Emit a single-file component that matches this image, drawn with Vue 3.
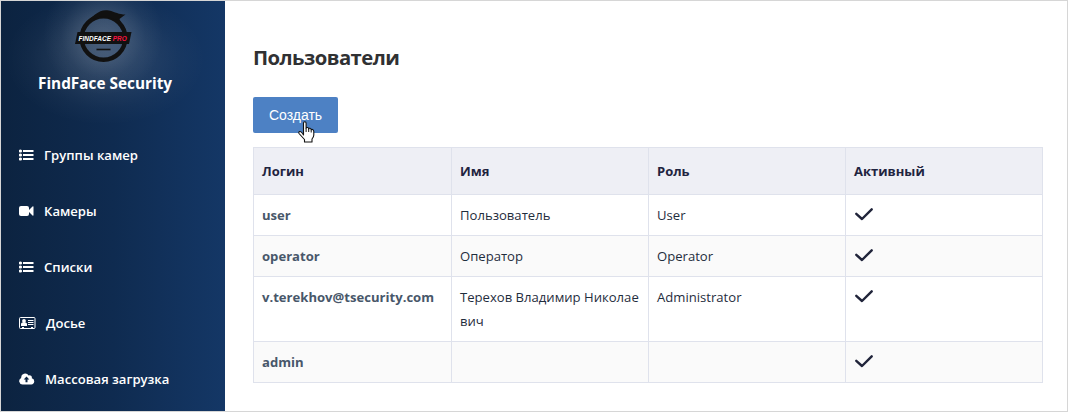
<script setup>
const nav = [
  { label: 'Группы камер', icon: 'list', cls: 'groups' },
  { label: 'Камеры', icon: 'camera', cls: 'cameras' },
  { label: 'Списки', icon: 'list', cls: 'lists' },
  { label: 'Досье', icon: 'card', cls: 'dossier' },
  { label: 'Массовая загрузка', icon: 'cloud', cls: 'upload' },
]
const columns = ['Логин', 'Имя', 'Роль', 'Активный']
const users = [
  { login: 'user', name: 'Пользователь', role: 'User' },
  { login: 'operator', name: 'Оператор', role: 'Operator' },
  { login: 'v.terekhov@tsecurity.com', name: 'Терехов Владимир Николаевич', role: 'Administrator' },
  { login: 'admin', name: '', role: '' },
]
</script>

<template>
  <div class="app">
    <aside class="sidebar">
      <div class="brand">
        <svg class="logo" width="58" height="56" viewBox="0 0 58 56">
          <circle cx="28.500" cy="30" r="21.800" fill="none" stroke="#111" stroke-width="4.400" />
          <path d="M9 18C13 12 17 9 20 6.500C25 2.500 29 1.500 34 2.500C40 4 44 6.500 50.500 6.500Q47 9 44.500 11L46 15Q39 9.500 29 8.500Q17 8.500 9 18Z" fill="#111" />
          <path d="M2.500 24H56.500L54 36H0Z" fill="#111" />
          <path d="M21.500 41.500H35.500" stroke="#111" stroke-width="1.600" />
          <g transform="scale(.8 1)">
            <text x="4.500" y="32.900" class="logo-text">FINDFACE</text>
            <text x="47.200" y="32.900" class="logo-text pro">PRO</text>
          </g>
        </svg>
        <div class="brand-name">FindFace Security</div>
      </div>
      <nav class="nav">
        <a v-for="item in nav" :key="item.label" class="nav-item" :class="item.cls">
          <svg v-if="item.icon === 'list'" class="icon" width="15" height="12" viewBox="0 0 15 12" fill="#fff">
            <path d="M4 1h10.500v2H4zM4 5h10.500v2H4zM4 9h10.500v2H4z" />
            <circle cx="1.500" cy="2" r="1.600" /><circle cx="1.500" cy="6" r="1.600" /><circle cx="1.500" cy="10" r="1.600" />
          </svg>
          <svg v-else-if="item.icon === 'camera'" class="icon" width="15" height="12" viewBox="0 0 15 12" fill="#fff">
            <rect x="0" y="1" width="10" height="10" rx="2" />
            <path d="M10 5L13.500 1.500Q14.500.8 14.500 2V10Q14.500 11.200 13.500 10.500L10 7Z" />
          </svg>
          <svg v-else-if="item.icon === 'card'" class="icon" width="17" height="12" viewBox="0 0 17 12" fill="#fff">
            <rect x=".5" y=".5" width="15.500" height="11" rx="1" fill="none" stroke="#fff" />
            <circle cx="5" cy="4" r="1.900" />
            <path d="M2 9V7Q2 5.500 3.500 5.500H6.500Q8 5.500 8 7V9ZM9 3h5.500v1H9zM9 5h5.500v1H9zM9 7h5.500v1H9zM3 10h2v1H3zM12 10h2v1h-2z" />
          </svg>
          <svg v-else class="icon" width="16" height="12" viewBox="0 0 16 12">
            <path fill="#fff" fill-rule="evenodd" d="M3.500 11.500A3.400 3.400 0 0 1 2.200 5A4 4 0 0 1 9.600 2.500A2.300 2.300 0 0 1 12.800 5.200A3.200 3.200 0 0 1 12.300 11.500ZM7.500 3.600L4.700 6.500H6.500V9.200H8.500V6.500H10.300Z" />
          </svg>
          <span class="nav-label">{{ item.label }}</span>
        </a>
      </nav>
    </aside>

    <main class="content">
      <h1 class="title"><span>Пользователи</span></h1>
      <button class="create">
        <span>Создать</span>
        <svg class="pointer" width="17" height="22" viewBox="0 0 17 22">
          <path d="M5.500 14V2.200Q5.500.7 6.800.7T8.100 2.200V7.500Q8.300 6.300 9.500 6.500T10.700 8Q11 7 12 7.300T13.200 8.800Q13.600 8 14.600 8.500T15.800 10.500V14Q15.800 16 14 18V21H6.500V18.500L1 12.500Q.4 10.800 1.800 10.500T5.500 14Z" fill="#fff" stroke="#111" stroke-width="1.100" stroke-linejoin="round" />
          <path d="M8.100 7.500V11M10.700 8V11M13.200 8.800V11.500" stroke="#111" fill="none" />
        </svg>
      </button>
      <div class="table">
        <div class="row head">
          <div v-for="c in columns" :key="c" class="cell"><span>{{ c }}</span></div>
        </div>
        <div v-for="u in users" :key="u.login" class="row">
          <div class="cell login"><span>{{ u.login }}</span></div>
          <div class="cell name"><span>{{ u.name }}</span></div>
          <div class="cell"><span>{{ u.role }}</span></div>
          <div class="cell">
            <svg class="check" width="18" height="13" viewBox="0 0 18 13">
              <path d="M1.300 5.800L7 11L16.700 1.300" fill="none" stroke="#20243a" stroke-width="2.400" stroke-linecap="round" stroke-linejoin="round" />
            </svg>
          </div>
        </div>
      </div>
    </main>
  </div>
</template>

<style>
body { margin: 0; }
</style>

<style scoped>
.app {
  box-sizing: border-box;
  width: 1068px;
  height: 412px;
  display: flex;
  overflow: hidden;
  border: 1px solid #d6d6d6;
  background: #fff;
  font-family: "Open Sans", "Noto Sans", sans-serif;
  font-size: 13px;
}
.sidebar {
  width: 224px;
  flex: none;
  color: #fff;
  background:
    radial-gradient(circle at 102px 34px, rgba(255, 255, 255, .17) 0, rgba(255, 255, 255, .13) 22px, rgba(255, 255, 255, .04) 42px, transparent 60px),
    radial-gradient(ellipse 100px 66px at 104px 58px, rgba(255, 255, 255, .11) 0, rgba(255, 255, 255, .08) 40%, rgba(255, 255, 255, .025) 75%, transparent 100%),
    linear-gradient(90deg, #0c2340 0%, #0f2b50 50%, #143766 100%);
}
.brand {
  height: 126px;
  display: flex;
  flex-direction: column;
  align-items: center;
  padding-right: 16px;
  box-sizing: border-box;
}
.logo { margin: 7px 2px 0 0; }
.logo-text {
  font: italic bold 8.1px "Liberation Sans", sans-serif;
  fill: #fff;
}
.logo-text.pro { fill: #f5133f; }
.brand-name {
  margin-top: 7px;
  font-size: 15.35px;
  line-height: 24px;
  font-weight: 700;
  white-space: nowrap;
}
.nav-item {
  height: 56px;
  display: flex;
  align-items: center;
  padding-left: 18px;
  font-weight: 600;
  font-size: 13.1px;
  white-space: nowrap;
}
.icon { flex: none; margin-right: 10px; }
.content {
  flex: 1;
  padding: 40px 24px 0 28px;
  display: flex;
  flex-direction: column;
  align-items: flex-start;
}
.title {
  margin: 0;
  font-size: 20.3px;
  letter-spacing: -.55px;
  line-height: 32px;
  font-weight: 700;
  color: #303133;
}
.create {
  position: relative;
  width: 85px;
  height: 36px;
  margin: 24px 0 14px;
  padding: 0;
  border: 0;
  border-radius: 2px;
  background: #4d81c4;
  color: #fff;
  font: 14px "Liberation Sans", sans-serif;
}
.pointer { position: absolute; left: 45px; top: 24px; }
.table {
  border-top: 1px solid #dfe2ec;
  border-left: 1px solid #dfe2ec;
  color: #1f2d3d;
}
.row { display: grid; grid-template-columns: 198px 197px 197px 197px; }
.row:nth-child(odd) { background: #fafafa; }
.cell {
  box-sizing: border-box;
  min-height: 41px;
  padding: 8px 8px 8px;
  line-height: 24px;
  word-break: break-all;
  border-right: 1px solid #dfe2ec;
  border-bottom: 1px solid #dfe2ec;
}
.row .cell:not(.login) { font-size: 13.1px; }
.row.head { background: #eeeff5; font-weight: 700; color: #1f2440; }
.row.head .cell:not(.login) { height: 47px; padding-top: 11px; font-size: 13px; }
.cell.login { color: #48576a; font-weight: 700; font-size: 13.1px; }
.check { display: block; margin: 5px 0 0 1px; }
</style>
